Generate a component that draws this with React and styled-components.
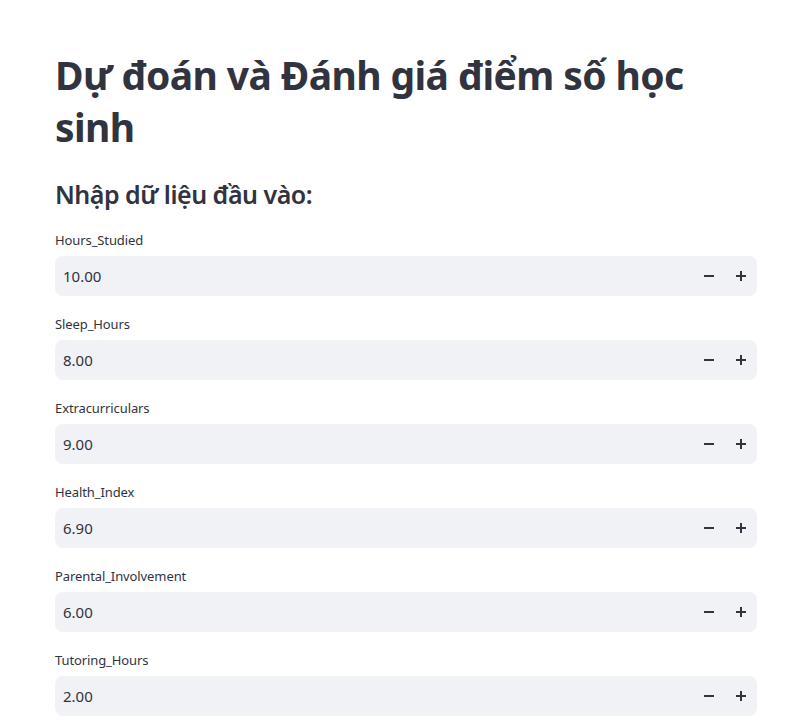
import React from "react";
import styled, { createGlobalStyle } from "styled-components";

const GlobalStyle = createGlobalStyle`
  body {
    margin: 0;
    background: #ffffff;
    font-family: "Noto Sans", "Liberation Sans", sans-serif;
    color: rgb(49, 51, 63);
  }
`;

const Page = styled.main`
  padding: 49px 0 40px 55px;
  width: 702px;
`;

const Title = styled.h1`
  margin: 0;
  font-size: 39px;
  line-height: 52px;
  font-weight: 700;
  letter-spacing: -0.6px;
  color: rgb(49, 51, 63);
`;

const Subheader = styled.h3`
  margin: 24px 0 17px;
  font-size: 25px;
  line-height: 34px;
  font-weight: 600;
  letter-spacing: -0.5px;
`;

const Fields = styled.div`
  display: flex;
  flex-direction: column;
  gap: 16px;
`;

const Field = styled.div`
  display: flex;
  flex-direction: column;
`;

const Label = styled.label`
  font-size: 13px;
  line-height: 24px;
  margin-bottom: 4px;
  letter-spacing: -0.1px;
`;

const InputBox = styled.div`
  display: flex;
  align-items: center;
  height: 40px;
  background: #f0f2f6;
  border-radius: 8px;
`;

const Value = styled.span`
  flex: 1;
  padding-left: 8px;
  font-size: 15px;
`;

const StepButton = styled.button`
  width: 32px;
  height: 40px;
  border: none;
  background: transparent;
  display: flex;
  align-items: center;
  justify-content: center;
  padding: 0;
  color: rgb(49, 51, 63);
`;

const Minus = () => (
  <svg width="10" height="10" viewBox="0 0 10 10">
    <path d="M0 5h10" stroke="currentColor" strokeWidth="2" />
  </svg>
);

const Plus = () => (
  <svg width="10" height="10" viewBox="0 0 10 10">
    <path d="M0 5h10M5 0v10" stroke="currentColor" strokeWidth="2" />
  </svg>
);

const fields = [
  { name: "Hours_Studied", value: "10.00" },
  { name: "Sleep_Hours", value: "8.00" },
  { name: "Extracurriculars", value: "9.00" },
  { name: "Health_Index", value: "6.90" },
  { name: "Parental_Involvement", value: "6.00" },
  { name: "Tutoring_Hours", value: "2.00" }
];

const NumberInput = ({ name, value }) => (
  <Field>
    <Label>{name}</Label>
    <InputBox>
      <Value>{value}</Value>
      <StepButton aria-label="minus">
        <Minus />
      </StepButton>
      <StepButton aria-label="plus">
        <Plus />
      </StepButton>
    </InputBox>
  </Field>
);

const App = () => (
  <>
    <GlobalStyle />
    <Page>
      <Title>Dự đoán và Đánh giá điểm số học sinh</Title>
      <Subheader>Nhập dữ liệu đầu vào:</Subheader>
      <Fields>
        {fields.map(f => (
          <NumberInput key={f.name} {...f} />
        ))}
      </Fields>
    </Page>
  </>
);

export default App;
